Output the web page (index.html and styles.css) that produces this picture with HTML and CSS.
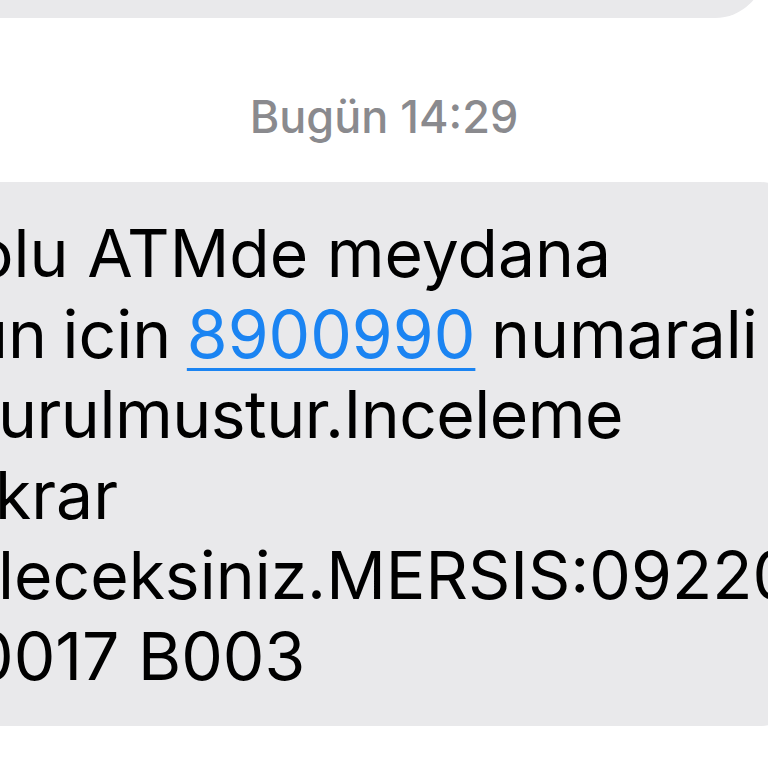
FILE: index.html
```html
<!DOCTYPE html>
<html lang="tr">
<head>
    <meta charset="UTF-8">
    <meta name="viewport" content="width=device-width, initial-scale=1.0">
    <title>Mesajlar</title>
    <link rel="stylesheet" href="styles.css">
</head>
<body>
    <div class="thread">
        <!-- Previous message (mostly scrolled out of view) -->
        <div class="bubble bubble-prev"></div>

        <div class="timestamp">Bugün 14:29</div>

        <!-- Incoming SMS -->
        <div class="bubble bubble-in">
            <div class="line line-1">olu ATMde meydana</div>
            <div class="line line-2">un icin <a href="#" class="link">8900990</a> numarali</div>
            <div class="line line-3">urulmustur.Inceleme</div>
            <div class="line line-4">krar</div>
            <div class="line line-5">leceksiniz.MERSIS:0922000</div>
            <div class="line line-6">0017 B003</div>
        </div>
    </div>
</body>
</html>
```

FILE: styles.css
```css
* {
    margin: 0;
    padding: 0;
    box-sizing: border-box;
}

html, body {
    width: 768px;
    height: 768px;
    overflow: hidden;
    background-color: #ffffff;
}

body {
    font-family: Inter, "Noto Sans", sans-serif;
    color: #000;
}

.thread {
    display: flex;
    flex-direction: column;
}

.bubble {
    background-color: #e9e9eb;
}

/* only the bottom of this bubble is still on screen */
.bubble-prev {
    width: 765px;
    height: 78px;
    margin-top: -60px;
    border-bottom-right-radius: 50px;
}

.timestamp {
    margin-top: 74px;
    height: 50px;
    line-height: 50px;
    font-size: 45px;
    font-weight: 500;
    color: #8a8a8e;
    text-align: center;
}

/* wider than the screen, its right corner just starts at the bottom */
.bubble-in {
    margin-top: 40px;
    width: 800px;
    padding: 31px 0 29px 0;
    border-radius: 0 40px 40px 0;
    overflow: hidden;
}

.line {
    font-size: 66px;
    line-height: 80.6px;
    white-space: nowrap;
}

/* lines start mid-word: the bubble's left edge is off screen */
.line-1 { text-indent: -26px; }
.line-2 { text-indent: -31px; word-spacing: -3px; }
.line-3 { text-indent: -2px; letter-spacing: -0.5px; }
.line-4 { text-indent: -5px; }
.line-5 { text-indent: -2px; }
.line-6 { text-indent: -28px; }

.link {
    color: #1b84f2;
    text-decoration: underline;
    text-decoration-thickness: 3px;
    text-underline-offset: 10px;
}
```
